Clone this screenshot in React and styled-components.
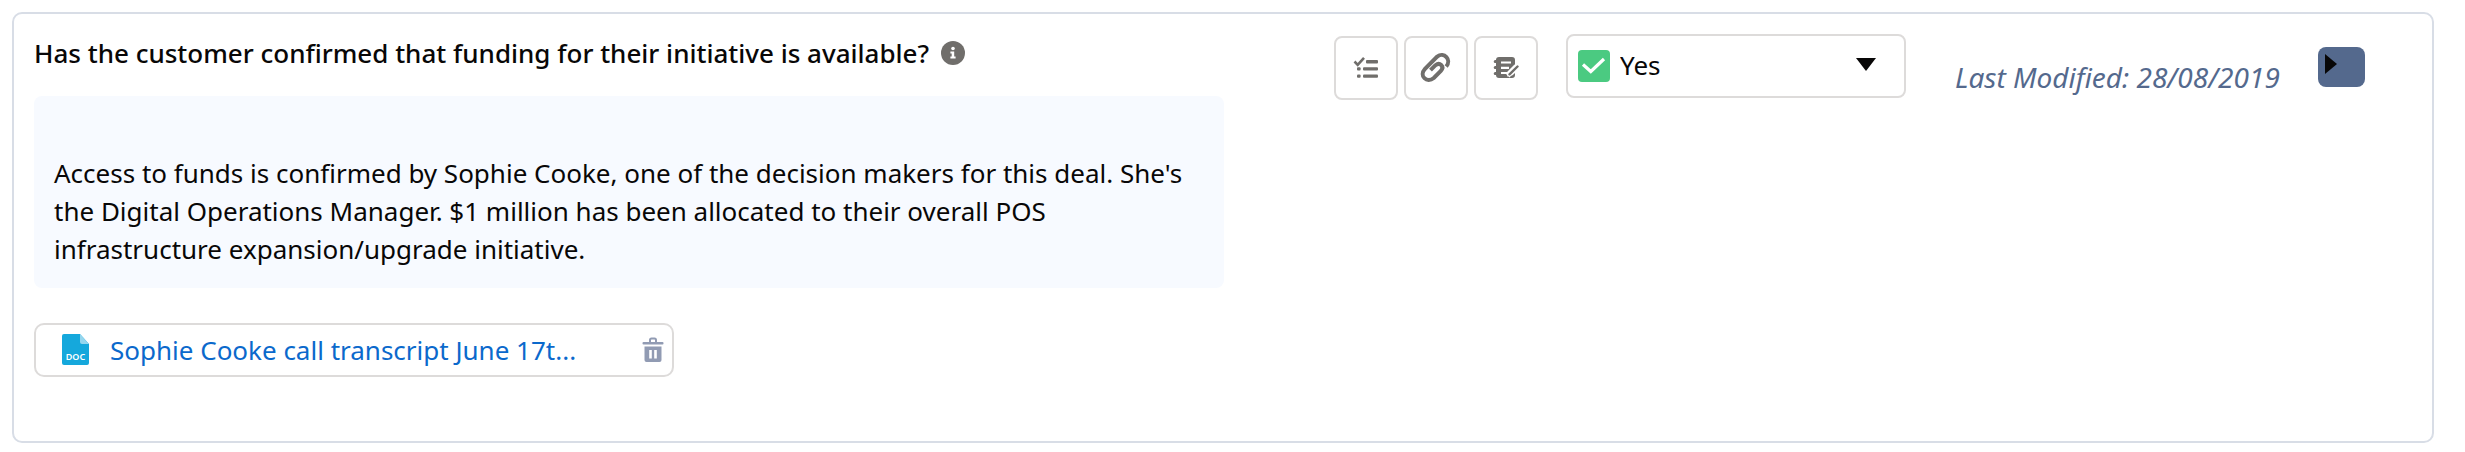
import { useState } from 'react';
import styled, { createGlobalStyle } from 'styled-components';

const GlobalStyle = createGlobalStyle`
  * {
    box-sizing: border-box;
  }
  body {
    margin: 0;
    background: #fff;
    color: #080707;
    font-family: "Noto Sans", "Open Sans", sans-serif;
    font-size: 26px;
    line-height: 38px;
  }
  button, select {
    font: inherit;
    color: inherit;
    cursor: pointer;
  }
`;

const Card = styled.section`
  display: flex;
  align-items: flex-start;
  gap: 110px;
  margin: 12px 31px 10px 12px;
  padding: 20px 67px 64px 20px;
  border: 2px solid #d8dde6;
  border-radius: 10px;
`;

const Answer = styled.div`
  flex: 1;
  min-width: 0;
`;

const Question = styled.h2`
  display: flex;
  align-items: center;
  gap: 12px;
  margin: 0 0 24px;
  font-size: 26px;
  font-weight: 500;
  line-height: 38px;
`;

const Notes = styled.div`
  padding: 58px 32px 20px 20px;
  border-radius: 8px;
  background: #f7faff;

  p {
    margin: 0;
  }
`;

const Attachment = styled.div`
  display: flex;
  align-items: center;
  width: 640px;
  height: 54px;
  margin-top: 35px;
  padding: 0 8px 0 26px;
  border: 2px solid #dddbda;
  border-radius: 10px;

  a {
    flex: 1;
    margin-left: 20px;
    color: #0b69cc;
    text-decoration: none;
  }
`;

const PlainButton = styled.button`
  display: flex;
  padding: 0;
  border: 0;
  background: none;
`;

const Toolbar = styled.div`
  display: flex;
  align-items: flex-start;
`;

const ButtonGroup = styled.div`
  display: flex;
  gap: 6px;
  margin: 2px 28px 0 0;
`;

const IconButton = styled.button`
  display: flex;
  align-items: center;
  justify-content: center;
  width: 64px;
  height: 64px;
  padding: 0;
  border: 2px solid #dddbda;
  border-radius: 8px;
  background: #fff;
`;

const SelectBox = styled.label`
  position: relative;
  width: 340px;

  select {
    width: 100%;
    height: 64px;
    padding: 0 52px 2px 52px;
    border: 2px solid #dddbda;
    border-radius: 8px;
    background: #fff;
    appearance: none;
  }
  svg {
    position: absolute;
    pointer-events: none;
  }
  .status {
    left: 12px;
    top: 16px;
  }
  .caret {
    right: 30px;
    top: 24px;
  }
`;

const Modified = styled.span`
  width: 412px;
  padding: 24px 0 0 49px;
  color: #54698d;
  font-size: 28px;
  font-style: italic;
  white-space: nowrap;
`;

const ExpandButton = styled.button`
  display: flex;
  width: 47px;
  height: 40px;
  margin-top: 13px;
  padding: 7px;
  border: 0;
  border-radius: 8px;
  background: #54698d;
`;

const InfoIcon = () => (
  <svg width="24" height="24" viewBox="0 0 24 24" aria-hidden="true">
    <circle cx="12" cy="12" r="12" fill="#706e6b" />
    <circle cx="12" cy="7.5" r="1.8" fill="#fff" />
    <path d="M9.4 10.5h3.8v5h1.4v2H9.4v-2h1.3v-3H9.4z" fill="#fff" />
  </svg>
);

const ChecklistIcon = () => (
  <svg width="26" height="24" viewBox="0 0 26 24" aria-hidden="true">
    <path d="M1.5 5.5l3.2 3.3L11 1.8" fill="none" stroke="#706e6b" strokeWidth="2.6" />
    <g fill="#706e6b">
      <rect x="13" y="4" width="12" height="3.4" rx="1" />
      <rect x="4" y="11.2" width="3.6" height="3.4" rx="1" />
      <rect x="10" y="11.2" width="15" height="3.4" rx="1" />
      <rect x="4" y="18.4" width="3.6" height="3.4" rx="1" />
      <rect x="10" y="18.4" width="15" height="3.4" rx="1" />
    </g>
  </svg>
);

const LinkIcon = () => (
  <svg width="32" height="32" viewBox="0 0 32 32" aria-hidden="true">
    <path
      d="M26.2 14.5C32 7.5 24-0.5 17.2 4.6L5 16.8C-1.5 24 7 31.5 13.8 26L20.8 19C25 14 19.5 9.8 15.5 13.2L10.5 18.2"
      fill="none"
      stroke="#706e6b"
      strokeWidth="4"
    />
  </svg>
);

const NotebookIcon = () => (
  <svg width="26" height="24" viewBox="0 0 26 24" aria-hidden="true">
    <path
      d="M6 1h13q3 0 3 3v4.5l-6.700 6.700-1.200 5.300 5.400-1.200 2.500-2.300V19q0 3-3 3H6q-3 0-3-3H2.200a1.500 1.500 0 0 1 0-3H3v-3H2.200a1.500 1.500 0 0 1 0-3H3V7H2.200a1.500 1.500 0 0 1 0-3H3q0-3 3-3z"
      fill="#706e6b"
    />
    <path d="M8 6.5h10M8 11.8h8M8 17h6" stroke="#fff" strokeWidth="2.2" />
    <path d="M14.5 19.5l9-9" stroke="#fff" strokeWidth="5.5" />
    <path d="M16.5 18.3l8-7.8" stroke="#706e6b" strokeWidth="2.4" strokeLinecap="round" />
  </svg>
);

const CheckIcon = () => (
  <svg className="status" width="32" height="32" viewBox="0 0 32 32" aria-hidden="true">
    <rect width="32" height="32" rx="4" fill="#4bca81" />
    <path d="M5 14.5l7.8 7L26 9" fill="none" stroke="#fff" strokeWidth="3.2" />
  </svg>
);

const DocIcon = () => (
  <svg width="28" height="32" viewBox="0 0 28 32" aria-hidden="true">
    <path d="M2 0h16l9 10v19q0 2-2 2H2q-2 0-2-2V2q0-2 2-2z" fill="#15a8dc" />
    <path d="M18 0l9 10h-7q-2 0-2-2z" fill="#95d6ee" />
    <text x="13.5" y="26" textAnchor="middle" fill="#fff" fontSize="9" fontWeight="600">DOC</text>
  </svg>
);

const TrashIcon = () => (
  <svg width="22" height="26" viewBox="0 0 22 26" aria-hidden="true">
    <path d="M8 5V3q0-1.5 1.5-1.5h3Q14 1.5 14 3v2" fill="none" stroke="#919bb3" strokeWidth="2" />
    <rect x="0.5" y="5" width="21" height="2.5" rx="1" fill="#919bb3" />
    <path d="M2.5 9.5h17V23q0 2-2 2h-13q-2 0-2-2z" fill="#919bb3" />
    <path d="M8.5 13v8.5M13.5 13v8.5" stroke="#fff" strokeWidth="2.6" />
  </svg>
);

const App = () => {
  const [status, setStatus] = useState('yes');

  return (
    <>
      <GlobalStyle />
      <Card>
        <Answer>
          <Question>
            Has the customer confirmed that funding for their initiative is available?
            <InfoIcon />
          </Question>
          <Notes>
            <p>
              Access to funds is confirmed by Sophie Cooke, one of the decision makers for this deal. She's
              the Digital Operations Manager. $1 million has been allocated to their overall POS
              infrastructure expansion/upgrade initiative.
            </p>
          </Notes>
          <Attachment>
            <DocIcon />
            <a href="#transcript">Sophie Cooke call transcript June 17t...</a>
            <PlainButton aria-label="Delete attachment">
              <TrashIcon />
            </PlainButton>
          </Attachment>
        </Answer>

        {/* right side */}
        <Toolbar>
          <ButtonGroup>
            <IconButton aria-label="Tasks"><ChecklistIcon /></IconButton>
            <IconButton aria-label="Attach link"><LinkIcon /></IconButton>
            <IconButton aria-label="Notes"><NotebookIcon /></IconButton>
          </ButtonGroup>
          <SelectBox>
            <select aria-label="Answer" value={status} onChange={(e) => setStatus(e.target.value)}>
              <option value="yes">Yes</option>
              <option value="no">No</option>
            </select>
            <CheckIcon />
            <svg className="caret" width="20" height="13" viewBox="0 0 20 13" aria-hidden="true">
              <path d="M0 0h20L10 13z" fill="#080707" />
            </svg>
          </SelectBox>
          <Modified>Last Modified: 28/08/2019</Modified>
          <ExpandButton aria-label="Expand">
            <svg width="12" height="20" viewBox="0 0 12 20" aria-hidden="true">
              <path d="M0 0l12 10L0 20z" fill="#080707" />
            </svg>
          </ExpandButton>
        </Toolbar>
      </Card>
    </>
  );
};

export default App;
